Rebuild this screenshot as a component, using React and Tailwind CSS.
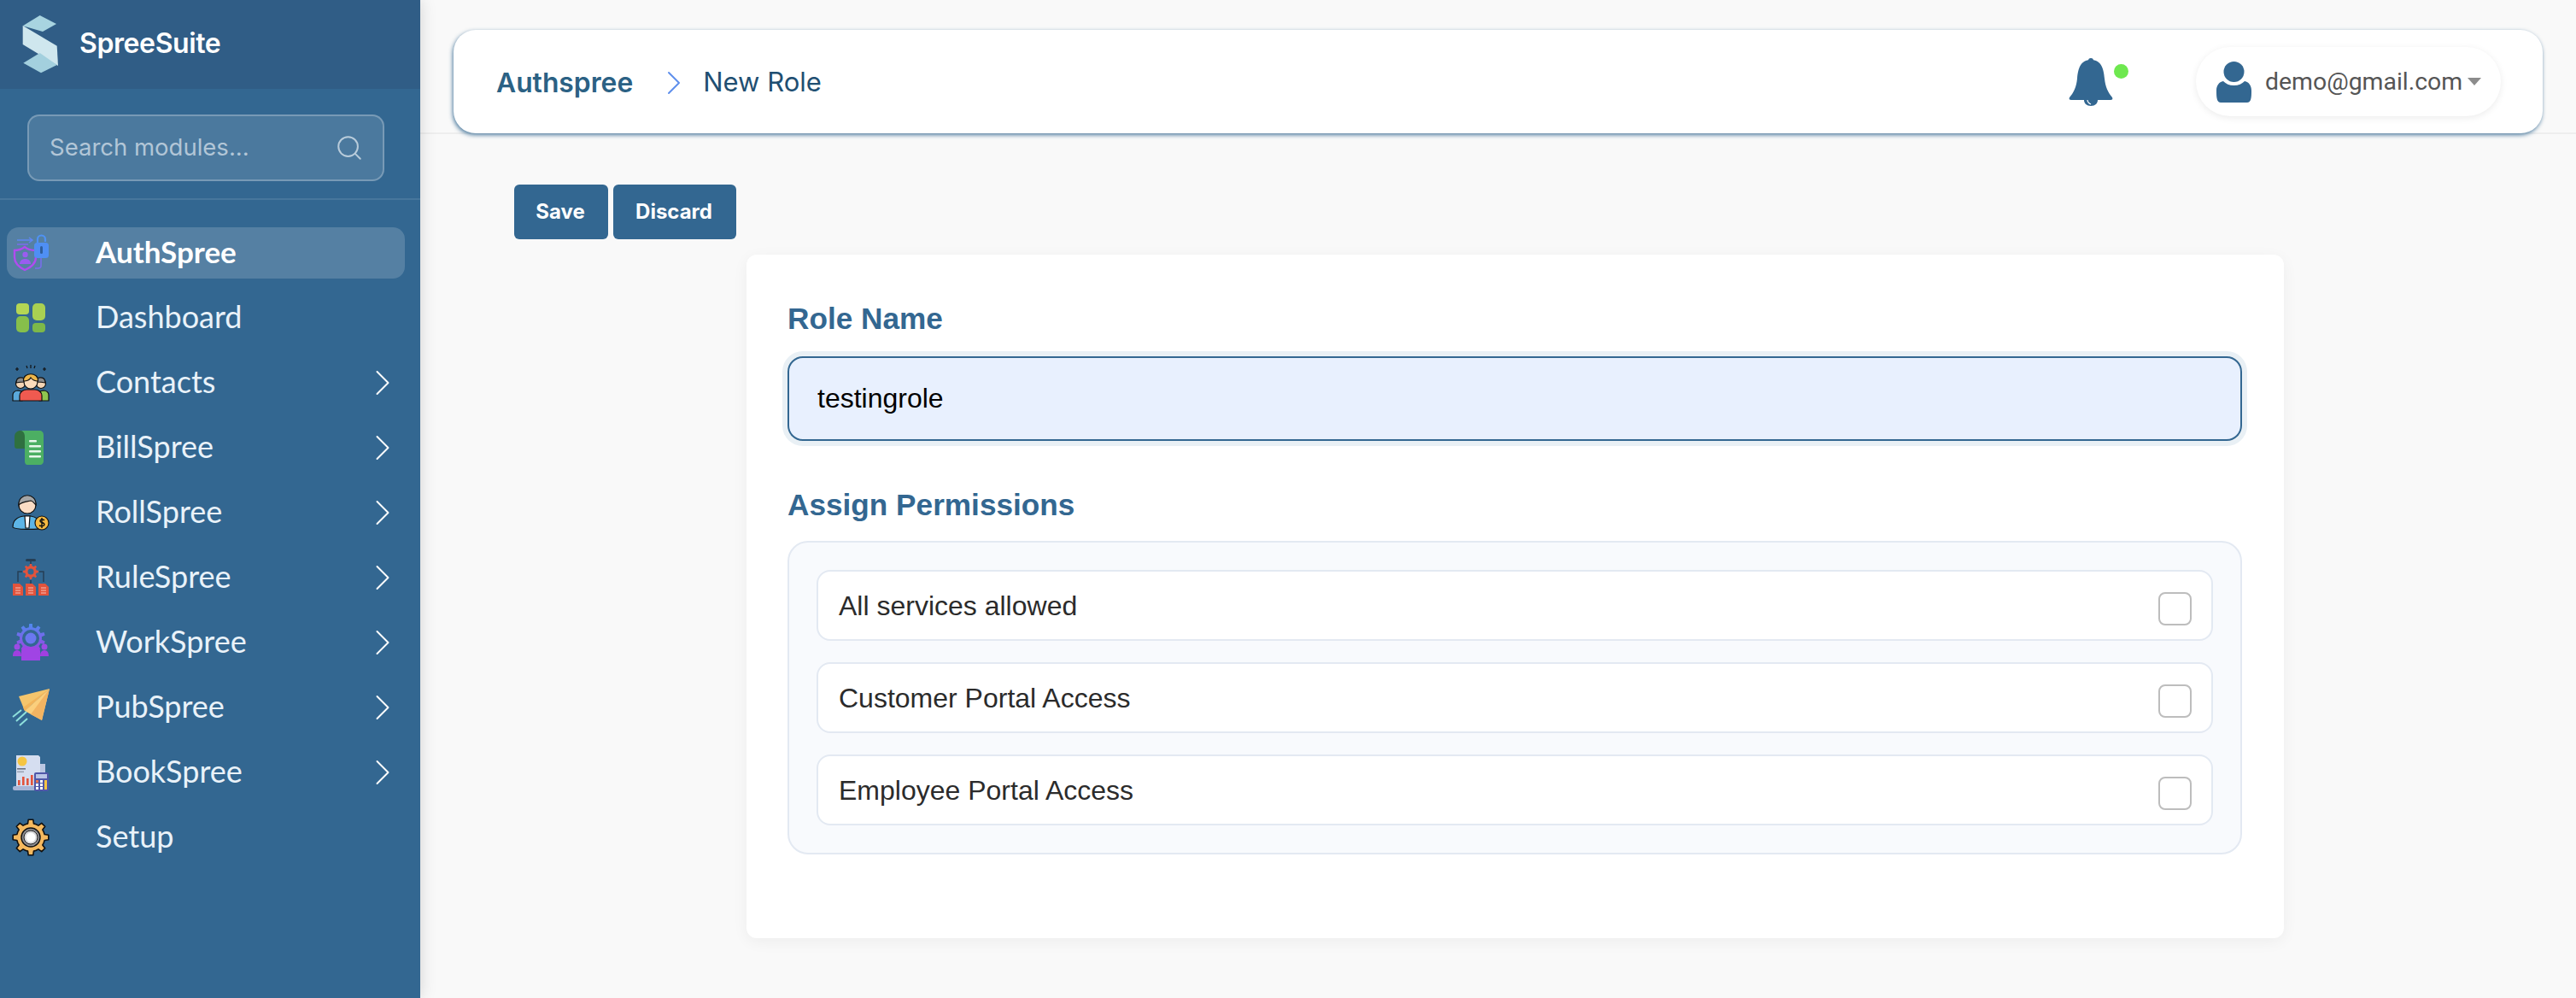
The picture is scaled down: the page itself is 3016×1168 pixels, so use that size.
import React from 'react';
import { ChevronRight, Search } from 'lucide-react';

// builds a cog outline, used by a few of the menu icons
const gearPath = (cx, cy, outer, inner, teeth) => {
    const step = (Math.PI * 2) / teeth;
    const pts = [];
    for (let i = 0; i < teeth; i++) {
        const a = i * step - Math.PI / 2;
        const p = (r, d) => `${(cx + r * Math.cos(a + d)).toFixed(2)} ${(cy + r * Math.sin(a + d)).toFixed(2)}`;
        pts.push(p(inner, -step * 0.5), p(inner, -step * 0.27), p(outer, -step * 0.17), p(outer, step * 0.17), p(inner, step * 0.27));
    }
    return `M${pts.join('L')}Z`;
};

const Logo = () => (
    <svg width="42" height="68" viewBox="0 0 42 68">
        <polygon points="0.7,12.3 20.7,0 40,10 24,19" fill="#a8d4e0" />
        <polygon points="0.7,12 40.7,35.7 42,59 0.7,34" fill="#cfe7ee" />
        <polygon points="1.3,55.7 20.7,44 40.7,58 22,67.3" fill="#a3d0de" />
    </svg>
);

const AuthIcon = () => (
    <svg width="44" height="44" viewBox="0 0 44 44" fill="none">
        <path d="M3 19c5 0 8-1 12-4 3 3 8 4 13 4v8c0 7-6 12-13 15C9 39 3 34 3 27z" stroke="#b04bf0" strokeWidth="2.4" />
        <circle cx="15.5" cy="24" r="3.2" fill="#9a5cf0" />
        <path d="M9 35c0-4 3-6 6.500-6s6.500 2 6.500 6z" fill="#9a5cf0" />
        <path d="M6 7h17M20 4l4 3-4 3" stroke="#5f86f2" strokeWidth="1.5" />
        <path d="M6 12h13" stroke="#7a6cee" strokeWidth="1.5" />
        <path d="M30 11V6a4.500 4.500 0 0 1 9 0v3" stroke="#4f92f4" strokeWidth="2.2" />
        <rect x="26" y="10" width="17" height="18" rx="3.500" fill="#4f8ff4" />
        <rect x="33" y="14" width="3" height="9" rx="1.500" fill="#2f5f9e" />
        <path d="M34 28v9c0 2-2 3-4 3h-3" stroke="#7a6cee" strokeWidth="1.5" />
    </svg>
);

const DashboardIcon = () => (
    <svg width="44" height="44" viewBox="0 0 44 44">
        <rect x="5" y="5" width="15" height="13" rx="4" fill="#b4d654" />
        <rect x="5" y="20" width="15" height="19" rx="5" fill="#86bf4b" />
        <rect x="24" y="5" width="15" height="20" rx="5" fill="#a9d052" />
        <rect x="24" y="28" width="15" height="11" rx="4" fill="#7db849" />
    </svg>
);

const ContactsIcon = () => (
    <svg width="44" height="44" viewBox="0 0 44 44" stroke="#111" strokeWidth="1.2">
        <path d="M1 43v-7c0-3 3-5 6-5l4 1 1 11z" fill="#5aa9dc" />
        <path d="M43 43v-7c0-3-3-5-6-5l-4 1-1 11z" fill="#8fc64f" />
        <circle cx="10" cy="23" r="5.500" fill="#f4d5b5" />
        <circle cx="34" cy="23" r="5.500" fill="#f4d5b5" />
        <path d="M5 22c0-8 10-8 11-1-4 0-7 0-11 1zM39 22c0-8-10-8-11-1 4 0 7 0 11 1z" fill="#8b8b8b" />
        <path d="M9 43v-6c0-4 4-7 8-7h10c4 0 8 3 8 7v6z" fill="#ef5a50" />
        <circle cx="22" cy="21" r="8" fill="#fbdcbc" />
        <path d="M13.500 20c-1-11 18-11 17 0-5 0-7-2-8.500-4-1 2-4 4-8.500 4z" fill="#eeb64a" />
        <g fill="none">
            <path d="M22 1v4M17 2l1 3M27 2l-1 3" />
            <path d="M6 4v4M4 6h4M38 4v4M36 6h4" />
        </g>
    </svg>
);

const BillIcon = () => (
    <svg width="44" height="44" viewBox="0 0 44 44">
        <path d="M3 9c0-4 3-7 7-7s7 3 7 7v14H6c-2 0-3-1-3-3z" fill="#2f7040" />
        <path d="M10 2h22c3 0 5 2 5 5v31c0 2-2 4-4 4H18c-2 0-3-2-3-4V9c0-4-2-7-5-7z" fill="#4caf63" />
        <g fill="#e9f7ec">
            <rect x="20" y="13" width="9" height="2.600" rx="1" />
            <rect x="20" y="19" width="14" height="2.600" rx="1" />
            <rect x="20" y="25" width="14" height="2.600" rx="1" />
            <rect x="20" y="31" width="14" height="2.600" rx="1" />
        </g>
    </svg>
);

const RollIcon = () => (
    <svg width="44" height="44" viewBox="0 0 44 44" stroke="#111" strokeWidth="1.2">
        <path d="M1 39c0-8 5-12 13-13h8c6 1 10 4 12 9v5c-3 2-31 2-33-1z" fill="#5db5e6" />
        <path d="M15 26h6l-1 14h-4z" fill="#fff" />
        <circle cx="18" cy="13" r="10" fill="#fbdcc4" />
        <path d="M8 13C7-2 29-2 28 13c-2-2-4-5-6-5-4 1-10 1-14 5z" fill="#a6a6a6" />
        <circle cx="35" cy="34" r="8" fill="#f5b942" />
        <path d="M38 31c-1-1-5-2-5 1 0 2 5 1 5 4 0 2-4 2-6 1M35 28v12" fill="none" strokeWidth="1.400" />
    </svg>
);

const RuleIcon = () => (
    <svg width="44" height="44" viewBox="0 0 44 44">
        <rect x="16" y="0" width="12" height="3" rx="1.500" fill="#263f55" />
        <path d="M22 3v4M12 15H7v12M32 15h5v12M22 25v4" stroke="#263f55" strokeWidth="1.500" fill="none" />
        <path d={gearPath(22, 15, 9, 6.8, 8)} fill="#e2533c" />
        <circle cx="22" cy="15" r="3.500" fill="#336791" />
        {[1, 16, 31].map((x) => (
            <g key={x}>
                <path d={`M${x} 29h8l4 4v10H${x}z`} fill="#e2533c" />
                <path d={`M${x + 3} 34h6M${x + 3} 37h6M${x + 3} 40h6`} stroke="#f7c3b8" strokeWidth="1.200" />
            </g>
        ))}
    </svg>
);

const WorkIcon = () => (
    <svg width="44" height="44" viewBox="0 0 44 44">
        <defs>
            <linearGradient id="workFill" x1="0" y1="0" x2="0" y2="1">
                <stop offset="0" stopColor="#4f8af0" />
                <stop offset="1" stopColor="#a13fe0" />
            </linearGradient>
        </defs>
        <path d={gearPath(22, 17, 17, 13, 10)} fill="url(#workFill)" />
        <circle cx="22" cy="17" r="10" fill="#336791" />
        <circle cx="22" cy="17" r="6.500" fill="#6a78f0" />
        <circle cx="6" cy="27" r="3.500" fill="#9c4be6" />
        <circle cx="38" cy="27" r="3.500" fill="#9c4be6" />
        <path d="M1 38c0-5 2-7 5-7s5 2 5 7zM33 38c0-5 2-7 5-7s5 2 5 7z" fill="#a13fe0" />
        <path d="M11 43V32c0-3 3-5 11-5s11 2 11 5v11z" fill="#a044e4" />
    </svg>
);

const PubIcon = () => (
    <svg width="44" height="44" viewBox="0 0 44 44">
        <polygon points="8,9 44,0 15,26" fill="#f5c56c" />
        <polygon points="44,0 15,26 13,22" fill="#f2b45a" />
        <polygon points="44,0 15,26 35,37" fill="#fbcf7c" />
        <polygon points="44,0 22,30 35,37" fill="#f3b462" />
        <g stroke="#8fe0dc" strokeWidth="2">
            <path d="M1 33L11 25M5 38l12-11M9 43l9-8" />
        </g>
    </svg>
);

const BookIcon = () => (
    <svg width="44" height="44" viewBox="0 0 44 44">
        <path d="M5 2h26l2 2v36H5z" fill="#d5def0" />
        <rect x="33" y="12" width="6" height="28" fill="#bac7e2" />
        <rect x="1" y="38" width="38" height="5" rx="2" fill="#a9b5d6" />
        <circle cx="12" cy="9" r="5.500" fill="#f5c542" />
        <rect x="6" y="17" width="10" height="1.600" fill="#6b7280" />
        <rect x="6" y="20.500" width="8" height="1.600" fill="#9aa3b5" />
        <g fill="#e2533c">
            <rect x="7" y="31" width="2.600" height="6" />
            <rect x="12" y="27" width="2.600" height="10" />
            <rect x="17" y="29" width="2.600" height="8" />
            <rect x="22" y="25" width="2.600" height="12" />
        </g>
        <rect x="26" y="22" width="17" height="22" rx="2" fill="#4f57a8" />
        <rect x="28" y="24" width="13" height="5" fill="#b8c4e6" />
        <g fill="#fff">
            <rect x="33" y="31" width="3" height="3" />
            <rect x="33" y="35" width="3" height="3" />
            <rect x="33" y="39" width="3" height="3" />
            <rect x="28" y="35" width="3" height="3" />
            <rect x="28" y="39" width="3" height="3" />
        </g>
        <rect x="28" y="31" width="3" height="3" fill="#e8734f" />
        <rect x="38" y="31" width="3" height="11" fill="#f5c542" />
    </svg>
);

const SetupIcon = () => (
    <svg width="44" height="44" viewBox="0 0 44 44">
        <path d={gearPath(22, 22, 21, 16.5, 8)} fill="#f5b95f" stroke="#111" strokeWidth="1.600" strokeLinejoin="round" />
        <circle cx="22" cy="22" r="11" fill="#8e8e92" stroke="#111" strokeWidth="1.400" />
        <circle cx="22" cy="22" r="8" fill="#d8d8da" stroke="#222" strokeWidth="1" />
        <circle cx="22" cy="22" r="5.500" fill="#fff" />
    </svg>
);

const BellIcon = () => (
    <svg width="52" height="56" viewBox="0 0 52 56">
        <circle cx="26" cy="3" r="3" fill="#336791" />
        <path d="M26 2C14 2 11 12 10 24c-1 10-4 16-9 22-1 2 0 3 2 3h46c2 0 3-1 2-3-5-6-8-12-9-22C41 12 38 2 26 2z" fill="#336791" />
        <path d="M18 49c0 4 3 7 8 7s8-3 8-7z" fill="#336791" />
        <path d="M22 49c0 3 2 4 4 5" stroke="#fff" strokeWidth="1.200" fill="none" />
    </svg>
);

const UserIcon = () => (
    <svg width="41" height="48" viewBox="0 0 41 48">
        <ellipse cx="20.5" cy="12" rx="12" ry="12" fill="#336791" />
        <path d="M8 23c3 3 7 5 12.500 5S30 26 33 23c5 1 8 5 8 11 0 4 0 8-1 11-1 2-2 3-4 3H5c-2 0-3-1-4-3-1-3-1-7-1-11 0-6 3-10 8-11z" fill="#336791" />
    </svg>
);

const menu = [
    { label: 'AuthSpree', icon: AuthIcon, active: true },
    { label: 'Dashboard', icon: DashboardIcon },
    { label: 'Contacts', icon: ContactsIcon, arrow: true },
    { label: 'BillSpree', icon: BillIcon, arrow: true },
    { label: 'RollSpree', icon: RollIcon, arrow: true },
    { label: 'RuleSpree', icon: RuleIcon, arrow: true },
    { label: 'WorkSpree', icon: WorkIcon, arrow: true },
    { label: 'PubSpree', icon: PubIcon, arrow: true },
    { label: 'BookSpree', icon: BookIcon, arrow: true },
    { label: 'Setup', icon: SetupIcon },
];

const permissions = ['All services allowed', 'Customer Portal Access', 'Employee Portal Access'];

const Sidebar = () => (
    <aside className="w-[492px] shrink-0 bg-[#336791] flex flex-col shadow-[0_0_18px_rgba(0,0,0,0.16)] z-10">
        <div className="h-[104px] bg-[#305d86] flex items-center pl-[26px] gap-[25px]">
            <Logo />
            <span className="pb-[2px] font-['Inter',sans-serif] text-[32px] font-semibold text-white tracking-[-0.4px]">SpreeSuite</span>
        </div>
        <div className="pt-[30px] pb-[20px] pl-[32px] pr-[42px] border-b-2 border-white/10">
            <div className="h-[78px] rounded-[14px] border-2 border-white/25 bg-white/12 flex items-center pl-[24px] pr-[22px]">
                <input
                    placeholder="Search modules..."
                    className="flex-1 min-w-0 bg-transparent outline-none font-['Inter',sans-serif] text-[27.5px] text-white placeholder:text-[#b2c6d7]"
                />
                <Search size={34} strokeWidth={1.4} className="text-[#b9ccdb]" />
            </div>
        </div>
        <nav className="pt-[32px] pl-[8px] pr-[18px] flex flex-col gap-[16px] font-['Lato',sans-serif] text-[36px] text-[#e9f2f9]">
            {menu.map(({ label, icon: Icon, active, arrow }) => (
                <div key={label} className={`h-[60px] pl-[6px] flex items-center rounded-[14px] ${active ? 'bg-white/17' : ''}`}>
                    <span className="w-[44px] h-[44px] shrink-0"><Icon /></span>
                    <span className={`ml-[54px] pb-[4px] flex-1 ${active ? 'font-bold text-white text-[35px]' : ''}`}>{label}</span>
                    {arrow && <ChevronRight size={52} strokeWidth={0.9} className="text-white" />}
                </div>
            ))}
        </nav>
    </aside>
);

const TopBar = () => (
    <header className="h-[157px] shrink-0 border-b-2 border-[#eeeeee] pt-[35px] px-[39px]">
        <div className="h-[121px] bg-white rounded-[26px] shadow-[-1px_2px_5px_rgba(51,103,145,0.85)] pl-[50px] pr-[49px] flex items-center justify-between font-['Inter',sans-serif]">
            <div className="flex items-center pt-[2px]">
                <span className="text-[31.8px] font-semibold text-[#2b6184]">Authspree</span>
                <ChevronRight size={48} strokeWidth={1} className="ml-[24px] text-[#5f8fec]" />
                <span className="ml-[10px] text-[31px] text-[#1f4f72]">New Role</span>
            </div>
            <div className="flex items-center">
                <div className="relative mr-[97px]">
                    <BellIcon />
                    <span className="absolute left-[53px] top-[7px] w-[17px] h-[17px] rounded-full bg-[#6ee84f]" />
                </div>
                <div className="w-[357px] h-[81px] rounded-full bg-white shadow-[0_2px_8px_rgba(0,0,0,0.08)] pl-[24px] flex items-center font-['Roboto',sans-serif]">
                    <UserIcon />
                    <span className="ml-[16px] pt-[2px] text-[28.4px] text-[#555555]">demo@gmail.com</span>
                    <span className="ml-[6px] w-0 h-0 border-x-[8px] border-x-transparent border-t-[9px] border-t-[#8c8c8c]" />
                </div>
            </div>
        </div>
    </header>
);

const RoleForm = () => (
    <section className="ml-[382px] mt-[18px] w-[1800px] h-[800px] bg-white rounded-[12px] shadow-[0_4px_18px_rgba(0,0,0,0.05)] pl-[48px] pr-[49px] pt-[53px] font-['Liberation_Sans',sans-serif]">
        <h2 className="text-[35.2px] leading-[44px] font-bold text-[#336791] mb-[22px]">Role Name</h2>
        <input
            defaultValue="testingrole"
            readOnly
            className="block w-full h-[99px] px-[33px] text-[32px] text-black bg-[#e8f0fe] border-2 border-[#336791] rounded-[18px] outline-none shadow-[0_0_0_6px_#e9f0f5]"
        />
        <h2 className="mt-[53px] text-[35.2px] leading-[44px] font-bold text-[#336791] mb-[20px]">Assign Permissions</h2>
        <div className="border-2 border-[#e3e9f2] bg-[#f8fafd] rounded-[24px] p-[32px] flex flex-col gap-[25px]">
            {permissions.map((name) => (
                <label key={name} className="h-[83px] bg-white border-2 border-[#e3e9f2] rounded-[16px] pl-[24px] pr-[23px] flex items-center justify-between text-[32px] text-[#2b2b2b]">
                    <span>{name}</span>
                    <input type="checkbox" className="appearance-none mt-[7px] w-[39px] h-[39px] bg-white border-2 border-[#bdbdbd] rounded-[8px]" />
                </label>
            ))}
        </div>
    </section>
);

const App = () => (
    <div className="h-screen w-full flex overflow-hidden bg-[#f9f9f9]">
        <Sidebar />
        <main className="flex-1 min-w-0 flex flex-col">
            <TopBar />
            <div className="pt-[59px]">
                <div className="pl-[110px] flex gap-[6px] font-['Inter',sans-serif] text-[24px] font-bold text-white">
                    <button className="w-[110px] h-[64px] pr-[2px] bg-[#336791] rounded-[6px]">Save</button>
                    <button className="w-[144px] h-[64px] pr-[2px] bg-[#336791] rounded-[6px]">Discard</button>
                </div>
                <RoleForm />
            </div>
        </main>
    </div>
);

export default App;
